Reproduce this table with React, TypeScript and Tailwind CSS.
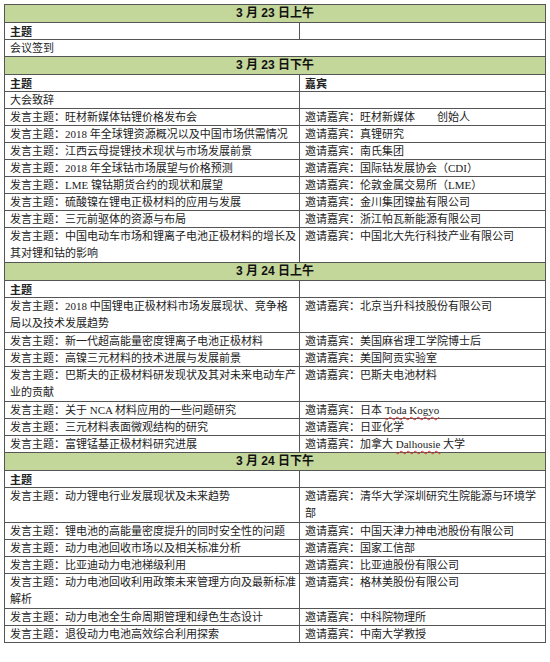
import React from "react";

type Item = { left: string[]; right: string[] };

type Section = {
  title: string;
  guestHead: boolean;
  span?: string;
  items: Item[];
};

const sections: Section[] = [
  {
    title: "3 月 23 日上午",
    guestHead: false,
    span: "会议签到",
    items: [],
  },
  {
    title: "3 月 23 日下午",
    guestHead: true,
    items: [
      { left: ["大会致辞"], right: [""] },
      { left: ["发言主题：旺材新媒体钴锂价格发布会"], right: ["邀请嘉宾：旺材新媒体　　创始人"] },
      { left: ["发言主题：2018 年全球锂资源概况以及中国市场供需情况"], right: ["邀请嘉宾：真锂研究"] },
      { left: ["发言主题：江西云母提锂技术现状与市场发展前景"], right: ["邀请嘉宾：南氏集团"] },
      { left: ["发言主题：2018 年全球钴市场展望与价格预测"], right: ["邀请嘉宾：国际钴发展协会（CDI）"] },
      { left: ["发言主题：LME 镍钴期货合约的现状和展望"], right: ["邀请嘉宾：伦敦金属交易所（LME）"] },
      { left: ["发言主题：硫酸镍在锂电正极材料的应用与发展"], right: ["邀请嘉宾：金川集团镍盐有限公司"] },
      { left: ["发言主题：三元前驱体的资源与布局"], right: ["邀请嘉宾：浙江帕瓦新能源有限公司"] },
      {
        left: ["发言主题：中国电动车市场和锂离子电池正极材料的增长及", "其对锂和钴的影响"],
        right: ["邀请嘉宾：中国北大先行科技产业有限公司"],
      },
    ],
  },
  {
    title: "3 月 24 日上午",
    guestHead: false,
    items: [
      {
        left: ["发言主题：2018 中国锂电正极材料市场发展现状、竞争格", "局以及技术发展趋势"],
        right: ["邀请嘉宾：北京当升科技股份有限公司"],
      },
      { left: ["发言主题：新一代超高能量密度锂离子电池正极材料"], right: ["邀请嘉宾：美国麻省理工学院博士后"] },
      { left: ["发言主题：高镍三元材料的技术进展与发展前景"], right: ["邀请嘉宾：美国阿贡实验室"] },
      {
        left: ["发言主题：巴斯夫的正极材料研发现状及其对未来电动车产", "业的贡献"],
        right: ["邀请嘉宾：巴斯夫电池材料"],
      },
      { left: ["发言主题：关于 NCA 材料应用的一些问题研究"], right: ["邀请嘉宾：日本 |Toda Kogyo|"] },
      { left: ["发言主题：三元材料表面微观结构的研究"], right: ["邀请嘉宾：日亚化学"] },
      { left: ["发言主题：富锂锰基正极材料研究进展"], right: ["邀请嘉宾：加拿大 |Dalhousie| 大学"] },
    ],
  },
  {
    title: "3 月 24 日下午",
    guestHead: false,
    items: [
      {
        left: ["发言主题：动力锂电行业发展现状及未来趋势"],
        right: ["邀请嘉宾：清华大学深圳研究生院能源与环境学", "部"],
      },
      { left: ["发言主题：锂电池的高能量密度提升的同时安全性的问题"], right: ["邀请嘉宾：中国天津力神电池股份有限公司"] },
      { left: ["发言主题：动力电池回收市场以及相关标准分析"], right: ["邀请嘉宾：国家工信部"] },
      { left: ["发言主题：比亚迪动力电池梯级利用"], right: ["邀请嘉宾：比亚迪股份有限公司"] },
      {
        left: ["发言主题：动力电池回收利用政策未来管理方向及最新标准", "解析"],
        right: ["邀请嘉宾：格林美股份有限公司"],
      },
      { left: ["发言主题：动力电池全生命周期管理和绿色生态设计"], right: ["邀请嘉宾：中科院物理所"] },
      { left: ["发言主题：退役动力电池高效综合利用探索"], right: ["邀请嘉宾：中南大学教授"] },
    ],
  },
];

// text between | | gets the red spell-check squiggle
function Line({ text, tall }: { text: string; tall?: boolean }) {
  const parts = text.split("|");
  return (
    <div className={`whitespace-nowrap ${tall ? "h-[17px] leading-[17px]" : "h-[16px] leading-[16px]"}`}>
      {parts.map((p, i) =>
        i % 2 === 1 ? (
          <span
            key={i}
            className="underline decoration-wavy decoration-[#e03030] decoration-1 underline-offset-2"
          >
            {p}
          </span>
        ) : (
          <span key={i}>{p}</span>
        )
      )}
    </div>
  );
}

const cell = "border border-[#555] pl-[5px] pr-1 p-0 align-top text-left";

export default function App() {
  return (
    <div className="bg-white w-[550px] h-[662px] pt-[4px] pl-[4px]">
      <table
        className="border-collapse w-[541px] table-fixed text-[11px] text-[#222]"
        style={{ fontFamily: '"Liberation Serif", "Noto Sans CJK SC", serif' }}
      >
        <colgroup>
          <col className="w-[295px]" />
          <col className="w-[246px]" />
        </colgroup>
        <tbody>
          {sections.map((s) => (
            <React.Fragment key={s.title}>
              <tr>
                <td
                  colSpan={2}
                  className="border border-[#555] bg-[#c4d79b] p-0 text-center font-bold text-[12px] text-[#111]"
                  style={{ fontFamily: '"Liberation Sans", "Noto Sans CJK SC", sans-serif' }}
                >
                  <div className="h-[17px] leading-[17px]">{s.title}</div>
                </td>
              </tr>
              <tr>
                <td className={`${cell} font-bold`} style={{ fontFamily: '"Noto Sans CJK SC", sans-serif' }}>
                  <Line text="主题" />
                </td>
                <td className={`${cell} font-bold`} style={{ fontFamily: '"Noto Sans CJK SC", sans-serif' }}>
                  <Line text={s.guestHead ? "嘉宾" : ""} />
                </td>
              </tr>
              {s.span && (
                <tr>
                  <td colSpan={2} className={cell}>
                    <Line text={s.span} />
                  </td>
                </tr>
              )}
              {s.items.map((it, i) => {
                const tall = it.left.length > 1 || it.right.length > 1;
                return (
                  <tr key={i}>
                    <td className={cell}>
                      {it.left.map((l, j) => (
                        <Line key={j} text={l} tall={tall} />
                      ))}
                    </td>
                    <td className={cell}>
                      {it.right.map((l, j) => (
                        <Line key={j} text={l} tall={tall} />
                      ))}
                    </td>
                  </tr>
                );
              })}
            </React.Fragment>
          ))}
        </tbody>
      </table>
    </div>
  );
}
